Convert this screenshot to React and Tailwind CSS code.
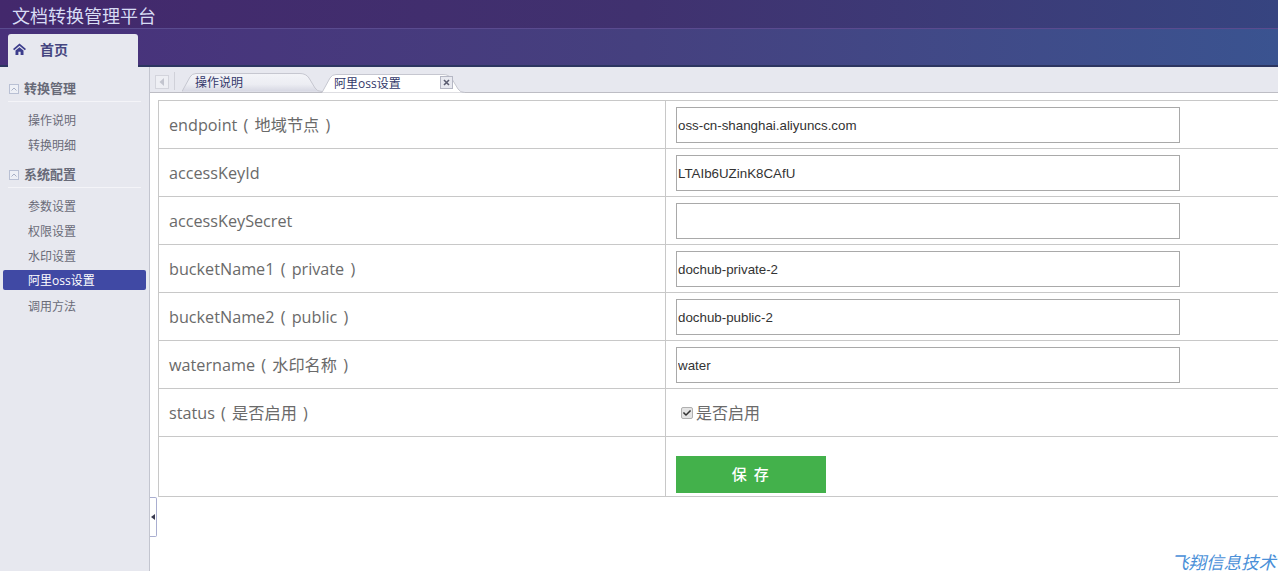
import { FaCheck } from "react-icons/fa";

const Group = ({ title, items, active }) => (
  <div className="mb-[6px]">
    <div className="mx-[8px] flex h-[24px] items-center border-b border-[#f4f4f8] pb-[2px]">
      <span className="ml-[1px] flex h-[10px] w-[10px] items-center justify-center border border-[#b9c0d4] bg-[#eef0f6]">
        <svg width="6" height="4" viewBox="0 0 6 4">
          <path d="M0.5 3.5 L3 1 L5.5 3.5" fill="none" stroke="#a8b0c6" strokeWidth="1" />
        </svg>
      </span>
      <span className="ml-[5px] text-[13px] font-bold text-[#686a78]">{title}</span>
    </div>
    <div className="mt-[6px]">
      {items.map((item) =>
        item === active ? (
          <div key={item} className="mx-[3px] mb-[4px] mt-[1px] flex h-[20px] items-center rounded-[2px] bg-[#4049a4] pl-[25px] pt-[2px] text-[12px] text-white">
            {item}
          </div>
        ) : (
          <div key={item} className="flex h-[25px] items-center pl-[28px] text-[12px] text-[#6a6b78]">
            {item}
          </div>
        )
      )}
    </div>
  </div>
);

const TabShape = ({ fill, width, gradId }) => (
  <svg className="absolute inset-0" width={width} height="19" viewBox={`0 0 ${width} 19`}>
    <defs>
      <linearGradient id="tabGrad" x1="0" y1="0" x2="0" y2="1">
        <stop offset="0" stopColor="#f3f4f8" />
        <stop offset="0.6" stopColor="#eceDf3" />
        <stop offset="1" stopColor="#d6d7e2" />
      </linearGradient>
    </defs>
    <path
      d={`M0 18.5 L8 4 Q10 0.5 14 0.5 L${width - 22} 0.5 Q${width - 16} 0.5 ${width - 13} 5 L${width - 7} 15 Q${width - 5} 18.5 ${width} 18.5`}
      fill={gradId ? "url(#tabGrad)" : fill}
      stroke="#c6c7d0"
    />
  </svg>
);

const Field = ({ label, value }) => (
  <div className="flex h-[48px] border-b border-[#c8c8c8]">
    <div className="flex w-[507px] shrink-0 items-center border-r border-[#c8c8c8] pl-[10px] pt-[2px] text-[16.2px] text-[#6a6a6a] [word-spacing:2px]">
      {label}
    </div>
    <div className="flex items-center pl-[10px]">
      <input
        readOnly
        value={value}
        className="h-[36px] w-[504px] border border-[#a9a9a9] bg-white px-[1px] pt-[2px] font-['Liberation_Sans',sans-serif] text-[13.33px] text-[#333] outline-none"
      />
    </div>
  </div>
);

export default function App() {
  return (
    <div className="flex h-[571px] w-full flex-col overflow-hidden bg-white font-['Open_Sans','Noto_Sans_CJK_SC',sans-serif]">
      <div className="h-[29px] border-b border-[#5a4b8f] bg-gradient-to-r from-[#43286c] via-[#40316f] to-[#364480] pl-[12px] text-[18px] leading-[32px] text-[#d8dcf4]">
        文档转换管理平台
      </div>
      <div className="flex h-[38px] items-end border-b-2 border-[#2c3560] bg-gradient-to-r from-[#48307a] via-[#45407f] to-[#3a5390] pl-[8px]">
        <div className="-mb-[2px] flex h-[33px] w-[130px] items-center rounded-t-[3px] bg-[#e7e8ef] pb-[2px] pl-[5px] text-[14px] font-bold text-[#45457f]">
          <svg width="13" height="12" viewBox="0 0 13 12" className="mb-[1px]">
            <path d="M6.5 0.5 L13 6 L11.8 7.2 L6.5 2.8 L1.2 7.2 L0 6 Z" fill="#3d3d8c" />
            <path d="M2.5 7.5 L6.5 4.2 L10.5 7.5 V12 H7.6 V8.8 H5.4 V12 H2.5 Z" fill="#3d3d8c" />
          </svg>
          <span className="ml-[14px]">首页</span>
        </div>
      </div>

      <div className="flex min-h-0 flex-1">
        <div className="w-[150px] shrink-0 border-r border-[#c3c5cf] bg-[#e7e8ef] pt-[11px]">
          <Group title="转换管理" items={["操作说明", "转换明细"]} />
          <Group title="系统配置" items={["参数设置", "权限设置", "水印设置", "阿里oss设置", "调用方法"]} active="阿里oss设置" />
        </div>

        <div className="relative flex min-w-0 flex-1 flex-col">
          <div className="flex h-[26px] shrink-0 items-end border-b border-[#bdbdc4] bg-[#e7e8ef]">
            <div className="mb-[3px] ml-[5px] flex h-[14px] w-[14px] items-center justify-center border border-[#d3d4dc] bg-[#eeeff4]">
              <svg width="6" height="8" viewBox="0 0 6 8">
                <path d="M5 0 L0.5 4 L5 8 Z" fill="#c3c5cf" />
              </svg>
            </div>
            <div className="mb-[2px] ml-[5px] h-[18px] w-px bg-[#d0d1d9]" />
            <div className="relative ml-[7px] h-[19px] w-[140px] text-[12px] leading-[19px] text-[#33386a]">
              <TabShape width={140} gradId />
              <span className="relative ml-[13px]">操作说明</span>
            </div>
            <div className="relative -mb-px h-[19px] w-[143px] text-[12px] leading-[19px] text-[#33386a]">
              <TabShape width={143} fill="#ffffff" />
              <span className="relative ml-[12px]">阿里oss设置</span>
              <span className="absolute left-[118px] top-[2px] flex h-[13px] w-[13px] items-center justify-center border border-[#b5b7c4] bg-[#e8e9f0]">
                <svg width="7" height="7" viewBox="0 0 7 7">
                  <path d="M1 1 L6 6 M6 1 L1 6" stroke="#5a5c70" strokeWidth="1.6" />
                </svg>
              </span>
            </div>
          </div>

          <div className="ml-[8px] mt-[7px] w-[1200px] shrink-0 border-l border-t border-[#c8c8c8]">
            <Field label="endpoint ( 地域节点 )" value="oss-cn-shanghai.aliyuncs.com" />
            <Field label="accessKeyId" value="LTAIb6UZinK8CAfU" />
            <Field label="accessKeySecret" value="" />
            <Field label="bucketName1 ( private )" value="dochub-private-2" />
            <Field label="bucketName2 ( public )" value="dochub-public-2" />
            <Field label="watername ( 水印名称 )" value="water" />
            <div className="flex h-[48px] border-b border-[#c8c8c8]">
              <div className="flex w-[507px] shrink-0 items-center border-r border-[#c8c8c8] pl-[10px] pt-[2px] text-[16.2px] text-[#6a6a6a] [word-spacing:2px]">
                status ( 是否启用 )
              </div>
              <div className="flex items-center pl-[15px] text-[16px] text-[#6a6a6a]">
                <span className="flex h-[12px] w-[12px] items-center justify-center rounded-[2px] border border-[#b0b0b0] bg-[#e4e4e4]">
                  <FaCheck size={8} className="text-[#333]" />
                </span>
                <span className="ml-[3px]">是否启用</span>
              </div>
            </div>
            <div className="flex h-[60px] border-b border-[#c8c8c8]">
              <div className="w-[507px] shrink-0 border-r border-[#c8c8c8]" />
              <div className="pl-[10px] pt-[19px]">
                <button className="h-[37px] w-[150px] bg-[#43b14b] text-[15px] font-medium tracking-[1.5px] text-white">保 存</button>
              </div>
            </div>
          </div>

          <div className="mt-auto whitespace-nowrap pr-[2px] text-right text-[17.5px] leading-[18px] text-[#4a90d8] italic">
            飞翔信息技术
          </div>

          <div className="absolute left-0 top-[430px] flex h-[40px] w-[7px] items-center justify-center rounded-r-[2px] border border-l-0 border-[#a9aed0] bg-white">
            <svg width="4" height="6" viewBox="0 0 4 6">
              <path d="M4 0 L0 3 L4 6 Z" fill="#3a3a50" />
            </svg>
          </div>
        </div>
      </div>
    </div>
  );
}
